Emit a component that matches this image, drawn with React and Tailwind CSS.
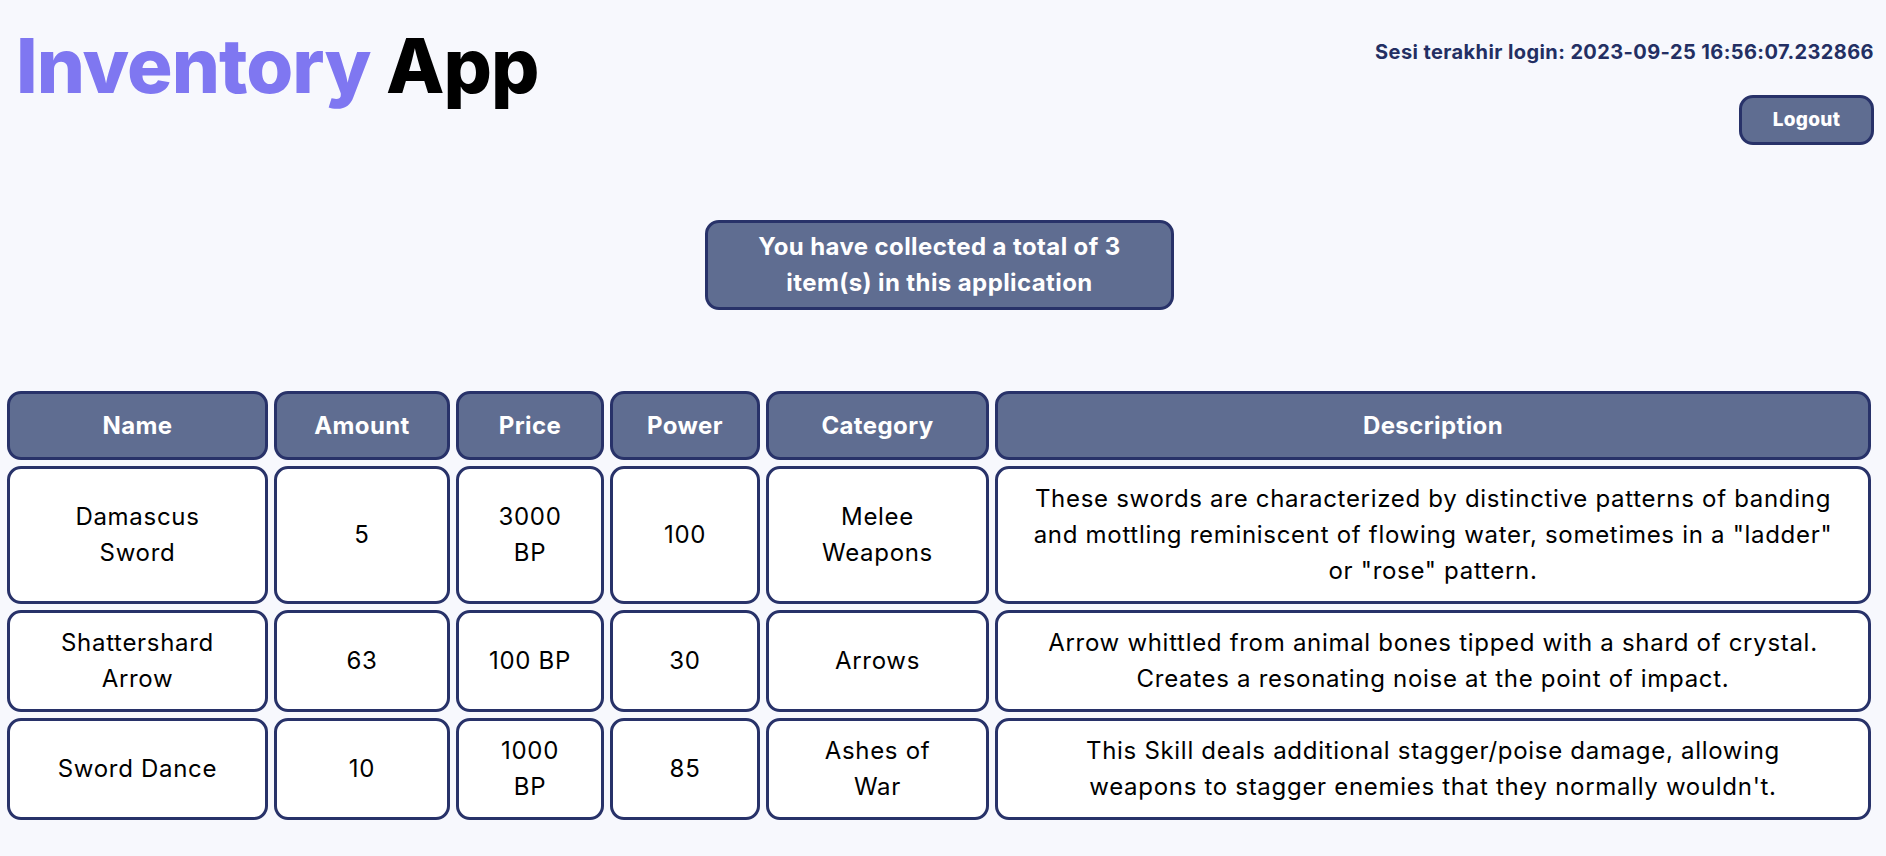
const items = [
    {
        id: 1,
        name: "Damascus Sword",
        amount: 5,
        price: "3000 BP",
        power: 100,
        category: "Melee Weapons",
        description: 'These swords are characterized by distinctive patterns of banding and mottling reminiscent of flowing water, sometimes in a "ladder" or "rose" pattern.',
    },
    {
        id: 2,
        name: "Shattershard Arrow",
        amount: 63,
        price: "100 BP",
        power: 30,
        category: "Arrows",
        description: "Arrow whittled from animal bones tipped with a shard of crystal. Creates a resonating noise at the point of impact.",
    },
    {
        id: 3,
        name: "Sword Dance",
        amount: 10,
        price: "1000 BP",
        power: 85,
        category: "Ashes of War",
        description: "This Skill deals additional stagger/poise damage, allowing weapons to stagger enemies that they normally wouldn't.",
    },
];

// widths + padding per column, tuned so the cells wrap like the original
const columns = [
    { key: "name", label: "Name", width: "w-[261px]", pad: "px-[36px]" },
    { key: "amount", label: "Amount", width: "w-[176px]", pad: "px-[24px]" },
    { key: "price", label: "Price", width: "w-[148px]", pad: "px-[26px]" },
    { key: "power", label: "Power", width: "w-[150px]", pad: "px-[24px]" },
    { key: "category", label: "Category", width: "w-[223px]", pad: "px-[40px]" },
    { key: "description", label: "Description", width: "w-[876px]", pad: "px-[34px]" },
];

function App() {
    const lastLogin = "2023-09-25 16:56:07.232866";

    return (
        <div className="min-h-screen bg-[#f7f8fd] font-['Inter',sans-serif]">
            <header className="flex justify-between items-start">
                <h1 className="pl-[16px] pt-[26px] text-[76px] leading-[78px] font-extrabold tracking-[-1px]">
                    <span className="text-[#7f77f1]">Inventory</span> <span className="text-black">App</span>
                </h1>

                <div className="flex flex-col items-end pr-[12px] pt-[38px]">
                    <p className="text-[20px] leading-[28px] font-bold tracking-[0.4px] text-[#232f63]">
                        Sesi terakhir login: {lastLogin}
                    </p>
                    <button className="mt-[29px] w-[135px] h-[50px] bg-[#5f6d91] border-[3px] border-[#283269] rounded-[14px] text-white text-[19px] font-extrabold tracking-[0.3px]">
                        Logout
                    </button>
                </div>
            </header>

            <div className="flex justify-center pr-[7px] mt-[75px]">
                <div className="w-[469px] bg-[#5f6d91] border-[3px] border-[#283269] rounded-[14px] px-[16px] py-[6px] text-center text-white text-[24px] leading-[36px] font-bold tracking-[0.4px]">
                    You have collected a total of {items.length} item(s) in this application
                </div>
            </div>

            <table className="mt-[75px] ml-px table-fixed border-separate border-spacing-[6px] w-[1876px]">
                <thead>
                    <tr>
                        {columns.map((col) => (
                            <th
                                key={col.key}
                                className={`${col.width} bg-[#5f6d91] border-[3px] border-[#283269] rounded-[14px] px-[12px] py-[13.5px] text-center text-white text-[24px] leading-[36px] font-bold tracking-[0.4px]`}
                            >
                                {col.label}
                            </th>
                        ))}
                    </tr>
                </thead>
                <tbody>
                    {items.map((item) => (
                        <tr key={item.id}>
                            {columns.map((col) => (
                                <td
                                    key={col.key}
                                    className={`${col.pad} bg-white border-[3px] border-[#283269] rounded-[14px] py-[12px] text-center align-middle text-[24px] leading-[36px] tracking-[0.7px] text-black`}
                                >
                                    {item[col.key]}
                                </td>
                            ))}
                        </tr>
                    ))}
                </tbody>
            </table>
        </div>
    );
}

export default App;
